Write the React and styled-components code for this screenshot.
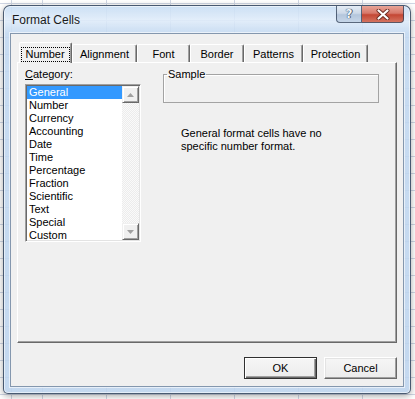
import React from 'react'
import styled, { createGlobalStyle, css } from 'styled-components'

const GlobalStyle = createGlobalStyle`
  html, body {
    margin: 0;
    padding: 0;
  }
  body {
    width: 415px;
    height: 399px;
    overflow: hidden;
    background-color: #ffffff;
    background-image:
      repeating-linear-gradient(90deg, #d0d7e5 0 1px, transparent 1px 64px),
      repeating-linear-gradient(180deg, #d0d7e5 0 1px, transparent 1px 17px);
    background-position: 42px 0, 0 3px;
    font-family: "Liberation Sans", Arial, sans-serif;
    font-size: 11px;
    color: #000;
  }
`

const Window = styled.div`
  box-sizing: border-box;
  width: 408px;
  height: 389px;
  margin: 5px 0 0 3px;
  padding: 0 6px 6px;
  display: flex;
  flex-direction: column;
  border: 1px solid rgba(30, 45, 70, 0.75);
  border-radius: 7px 7px 5px 5px;
  background: linear-gradient(
    180deg,
    rgba(198, 220, 243, 0.9) 0px,
    rgba(222, 235, 249, 0.86) 14px,
    rgba(194, 216, 240, 0.9) 28px,
    rgba(188, 211, 237, 0.88) 100%
  );
  box-shadow: inset 0 0 0 1px rgba(255, 255, 255, 0.55), 0 2px 7px rgba(0, 0, 0, 0.35);
`

const TitleBar = styled.div`
  height: 27px;
  display: flex;
  justify-content: space-between;
  align-items: flex-start;
`

const Title = styled.div`
  padding: 7px 0 0 2px;
  font-size: 12px;
  line-height: 15px;
  color: #1a1a1a;
`

const CaptionButtons = styled.div`
  display: flex;
`

const CaptionButton = styled.div`
  box-sizing: border-box;
  height: 17px;
  display: flex;
  align-items: center;
  justify-content: center;
  border: 1px solid rgba(45, 60, 85, 0.75);
  border-top: none;
  ${p => p.$close ? css`
    width: 42px;
    border-left: none;
    border-radius: 0 0 4px 0;
    background: linear-gradient(180deg, #e8a597 0%, #d7786a 45%, #c44734 55%, #d5735f 100%);
  ` : css`
    width: 26px;
    border-radius: 0 0 0 4px;
    background: linear-gradient(180deg, #e4ecf5 0%, #cdd9e8 45%, #b4c6dc 55%, #c6d6e8 100%);
  `}
`

const HelpGlyph = styled.span`
  font-family: "DejaVu Sans", sans-serif;
  font-size: 12px;
  font-weight: bold;
  line-height: 12px;
  color: #f4f7fb;
  text-shadow: 0 0 1px #3a4a60, 0 0 1px #3a4a60, 1px 0 0 #56677e;
`

const Client = styled.div`
  flex: 1;
  display: flex;
  flex-direction: column;
  background: #f0f0f0;
  border: 1px solid #8497ae;
  box-shadow: 0 0 0 1px rgba(255, 255, 255, 0.6);
  padding: 8px 6px 0 6px;
`

const TabStrip = styled.div`
  height: 20px;
  display: flex;
  align-items: flex-end;
  padding-left: 2px;
  position: relative;
  z-index: 1;
`

const Tab = styled.div`
  box-sizing: border-box;
  width: ${p => p.$w}px;
  height: 18px;
  padding-top: 3px;
  text-align: center;
  line-height: 13px;
  background: #f0f0f0;
  border-top: 1px solid #fff;
  border-left: 1px solid #fff;
  border-right: 1px solid #696969;
  border-radius: 2px 2px 0 0;
  box-shadow: inset -1px 0 #a0a0a0;
  ${p => p.$active && css`
    height: 21px;
    padding-top: 4px;
    margin-bottom: -1px;
  `}
`

const FocusLabel = styled.span`
  display: inline-block;
  padding: 0 4px 0 3px;
  border: 1px dotted #000;
`

const Panel = styled.div`
  box-sizing: border-box;
  height: 281px;
  display: flex;
  padding: 5px 0 0 7px;
  border: 1px solid;
  border-color: #fff #696969 #696969 #fff;
  box-shadow: inset -1px -1px #a0a0a0;
`

const LeftColumn = styled.div`
  width: 116px;
  display: flex;
  flex-direction: column;
`

const FieldLabel = styled.div`
  line-height: 13px;
`

const ListBox = styled.div`
  box-sizing: border-box;
  margin-top: 3px;
  width: 116px;
  height: 158px;
  display: flex;
  background: #fff;
  border: 1px solid;
  border-color: #a0a0a0 #fff #fff #a0a0a0;
  padding: 1px;
  box-shadow: inset 1px 1px #696969, inset -1px -1px #e3e3e3;
`

const Items = styled.div`
  flex: 1;
  overflow: hidden;
`

const Item = styled.div`
  height: 13px;
  line-height: 13px;
  padding-left: 2px;
  white-space: nowrap;
  ${p => p.$selected && css`
    background: #3399ff;
    color: #fff;
  `}
`

const ScrollBar = styled.div`
  width: 17px;
  display: flex;
  flex-direction: column;
  background-color: #f6f6f6;
  background-image: repeating-conic-gradient(#ececec 0 25%, #fafafa 0 50%);
  background-size: 2px 2px;
`

const ScrollButton = styled.div`
  box-sizing: border-box;
  height: 17px;
  display: flex;
  align-items: center;
  justify-content: center;
  background: #f0f0f0;
  border: 1px solid;
  border-color: #f0f0f0 #696969 #696969 #f0f0f0;
  box-shadow: inset 1px 1px #fff, inset -1px -1px #a0a0a0;
`

const Track = styled.div`
  flex: 1;
`

const RightColumn = styled.div`
  margin-left: 22px;
  width: 216px;
  display: flex;
  flex-direction: column;
`

const GroupBox = styled.fieldset`
  margin: 0;
  padding: 0;
  border: 1px solid #a3a3a3;
  box-shadow: inset 1px 1px #fff;
  min-inline-size: 0;
`

const GroupLegend = styled.legend`
  margin-left: 3px;
  padding: 0 1px;
  line-height: 13px;
`

const GroupBody = styled.div`
  height: 21px;
`

const Description = styled.div`
  margin: 24px 0 0 18px;
  max-width: 150px;
  line-height: 13px;
`

const ButtonRow = styled.div`
  margin-top: 14px;
  display: flex;
  justify-content: flex-end;
  gap: 7px;
`

const DialogButton = styled.button`
  box-sizing: border-box;
  width: 73px;
  height: 22px;
  padding: 0;
  font-family: "Liberation Sans", Arial, sans-serif;
  font-size: 11px;
  color: #000;
  background: linear-gradient(180deg, #f6f6f6 0%, #ececec 100%);
  border: 1px solid;
  border-color: #fff #696969 #696969 #fff;
  box-shadow: inset -1px -1px #a0a0a0, inset 1px 1px #e3e3e3;
  ${p => p.$default && css`
    border-color: #303030;
    box-shadow: inset 1px 1px #fff, inset -1px -1px #696969, inset -2px -2px #a0a0a0;
  `}
`

const Arrow = ({ up }) => (
  <svg width="7" height="4" viewBox="0 0 7 4">
    <path d={up ? 'M0 4 L3.5 0 L7 4 Z' : 'M0 0 L3.5 4 L7 0 Z'} fill="#a0a0a0" />
  </svg>
)

const CloseIcon = () => (
  <svg width="14" height="11" viewBox="0 0 14 11">
    <path d="M2.5 1.5 L11.5 9.5 M11.5 1.5 L2.5 9.5" stroke="#6b2a20" strokeWidth="4" strokeLinecap="round" />
    <path d="M2.5 1.5 L11.5 9.5 M11.5 1.5 L2.5 9.5" stroke="#fff" strokeWidth="2.2" strokeLinecap="round" />
  </svg>
)

const tabs = [
  { label: 'Number', w: 53 },
  { label: 'Alignment', w: 65 },
  { label: 'Font', w: 53 },
  { label: 'Border', w: 54 },
  { label: 'Patterns', w: 59 },
  { label: 'Protection', w: 65 },
]

const categories = [
  'General', 'Number', 'Currency', 'Accounting', 'Date', 'Time',
  'Percentage', 'Fraction', 'Scientific', 'Text', 'Special', 'Custom',
]

export default function App() {
  return (
    <>
      <GlobalStyle />
      <Window>
        <TitleBar>
          <Title>Format Cells</Title>
          <CaptionButtons>
            <CaptionButton><HelpGlyph>?</HelpGlyph></CaptionButton>
            <CaptionButton $close><CloseIcon /></CaptionButton>
          </CaptionButtons>
        </TitleBar>
        <Client>
          <TabStrip>
            {tabs.map((t, i) => (
              <Tab key={t.label} $w={t.w} $active={i === 0}>
                {i === 0 ? <FocusLabel>{t.label}</FocusLabel> : t.label}
              </Tab>
            ))}
          </TabStrip>
          <Panel>
            <LeftColumn>
              <FieldLabel><u>C</u>ategory:</FieldLabel>
              <ListBox>
                <Items>
                  {categories.map((c, i) => (
                    <Item key={c} $selected={i === 0}>{c}</Item>
                  ))}
                </Items>
                <ScrollBar>
                  <ScrollButton><Arrow up /></ScrollButton>
                  <Track />
                  <ScrollButton><Arrow /></ScrollButton>
                </ScrollBar>
              </ListBox>
            </LeftColumn>
            <RightColumn>
              <GroupBox>
                <GroupLegend>Sample</GroupLegend>
                <GroupBody />
              </GroupBox>
              <Description>
                General format cells have no specific number format.
              </Description>
            </RightColumn>
          </Panel>
          <ButtonRow>
            <DialogButton $default>OK</DialogButton>
            <DialogButton>Cancel</DialogButton>
          </ButtonRow>
        </Client>
      </Window>
    </>
  )
}
